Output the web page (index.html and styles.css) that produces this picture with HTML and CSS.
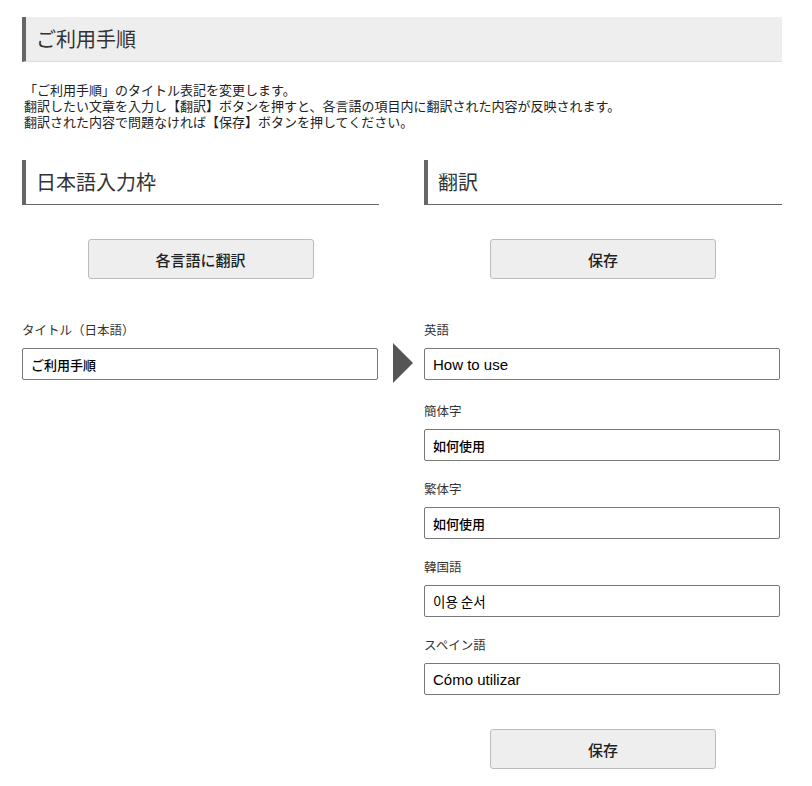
FILE: index.html
```html
<!DOCTYPE html>
<html lang="ja">
<head>
<meta charset="UTF-8">
<meta name="viewport" content="width=device-width, initial-scale=1.0">
<title>ご利用手順</title>
<link rel="stylesheet" href="styles.css">
</head>
<body>

<div class="container">
  <h1 class="page-title">ご利用手順</h1>

  <p class="lead">
    「ご利用手順」のタイトル表記を変更します。<br>
    翻訳したい文章を入力し【翻訳】ボタンを押すと、各言語の項目内に翻訳された内容が反映されます。<br>
    翻訳された内容で問題なければ【保存】ボタンを押してください。
  </p>

  <div class="columns">
    <div class="column">
      <h2 class="section-title">日本語入力枠</h2>
      <div class="button-row">
        <button class="button" type="button">各言語に翻訳</button>
      </div>
      <div class="field">
        <label class="field-label" for="titleJa">タイトル（日本語）</label>
        <input type="text" id="titleJa" class="field-input cjk" value="ご利用手順">
      </div>
    </div>

    <div class="arrow-col">
      <div class="arrow"></div>
    </div>

    <div class="column">
      <h2 class="section-title">翻訳</h2>
      <div class="button-row">
        <button class="button" type="button">保存</button>
      </div>
      <div class="field first">
        <label class="field-label" for="titleEn">英語</label>
        <input type="text" id="titleEn" class="field-input" value="How to use">
      </div>
      <div class="field">
        <label class="field-label" for="titleZhs">簡体字</label>
        <input type="text" id="titleZhs" class="field-input cjk" value="如何使用">
      </div>
      <div class="field">
        <label class="field-label" for="titleZht">繁体字</label>
        <input type="text" id="titleZht" class="field-input cjk" value="如何使用">
      </div>
      <div class="field">
        <label class="field-label" for="titleKo">韓国語</label>
        <input type="text" id="titleKo" class="field-input ko" value="이용 순서">
      </div>
      <div class="field">
        <label class="field-label" for="titleEs">スペイン語</label>
        <input type="text" id="titleEs" class="field-input" value="Cómo utilizar">
      </div>
      <div class="button-row bottom">
        <button class="button" type="button">保存</button>
      </div>
    </div>
  </div>
</div>

</body>
</html>
```

FILE: styles.css
```css
body {
  margin: 0;
  padding: 0;
  background-color: #fff;
  color: #333;
  font-family: "Noto Sans CJK JP", "Liberation Sans", sans-serif;
}
.container {
  width: 760px;
  padding: 17px 0 0 22px;
}
.page-title {
  margin: 0;
  height: 44px;
  line-height: 44px;
  padding-left: 10px;
  background-color: #eee;
  border-left: 4px solid #666;
  border-bottom: 1px solid #ddd;
  font-size: 20px;
  font-weight: normal;
  color: #333;
}
.lead {
  margin: 20px 0 0 2px;
  font-size: 13px;
  line-height: 16px;
  color: #222;
}
.columns {
  display: grid;
  grid-template-columns: 357px 45px 1fr;
  margin-top: 30px;
}
.section-title {
  margin: 0;
  height: 44px;
  line-height: 44px;
  padding-left: 10px;
  border-left: 4px solid #666;
  border-bottom: 1px solid #666;
  font-size: 20px;
  font-weight: normal;
  color: #333;
}
.button-row {
  display: flex;
  justify-content: center;
  margin-top: 34px;
  margin-bottom: 43px;
}
.button-row.bottom {
  margin-top: 34px;
  margin-bottom: 18px;
}
.button {
  width: 226px;
  height: 40px;
  padding: 0;
  background-color: #eee;
  color: #222;
  border: 1px solid #bbb;
  border-radius: 3px;
  font-family: "Noto Sans CJK JP", sans-serif;
  font-size: 15px;
  font-weight: 500;
  cursor: pointer;
}
.field {
  margin-bottom: 20px;
}
.field.first {
  margin-bottom: 23px;
}
.field-label {
  display: block;
  height: 16px;
  line-height: 16px;
  margin-bottom: 10px;
  font-size: 12.5px;
  color: #333;
}
.field-input {
  display: block;
  width: 100%;
  max-width: 356px;
  height: 32px;
  padding: 0 8px;
  border: 1px solid #777;
  border-radius: 2px;
  box-sizing: border-box;
  font-family: "Liberation Sans", "Noto Sans CJK JP", sans-serif;
  font-size: 15px;
  color: #000;
}
.field-input.cjk {
  font-family: "Noto Sans CJK JP", sans-serif;
  font-size: 13px;
  font-weight: 500;
}
.field-input.ko {
  font-family: "Noto Sans CJK KR", sans-serif;
  font-size: 13.5px;
}
.arrow-col {
  display: flex;
  justify-content: center;
}
.arrow {
  width: 0;
  height: 0;
  margin-top: 183px;
  margin-left: 2px;
  border-left: 20px solid #555;
  border-top: 20px solid transparent;
  border-bottom: 20px solid transparent;
}
```
